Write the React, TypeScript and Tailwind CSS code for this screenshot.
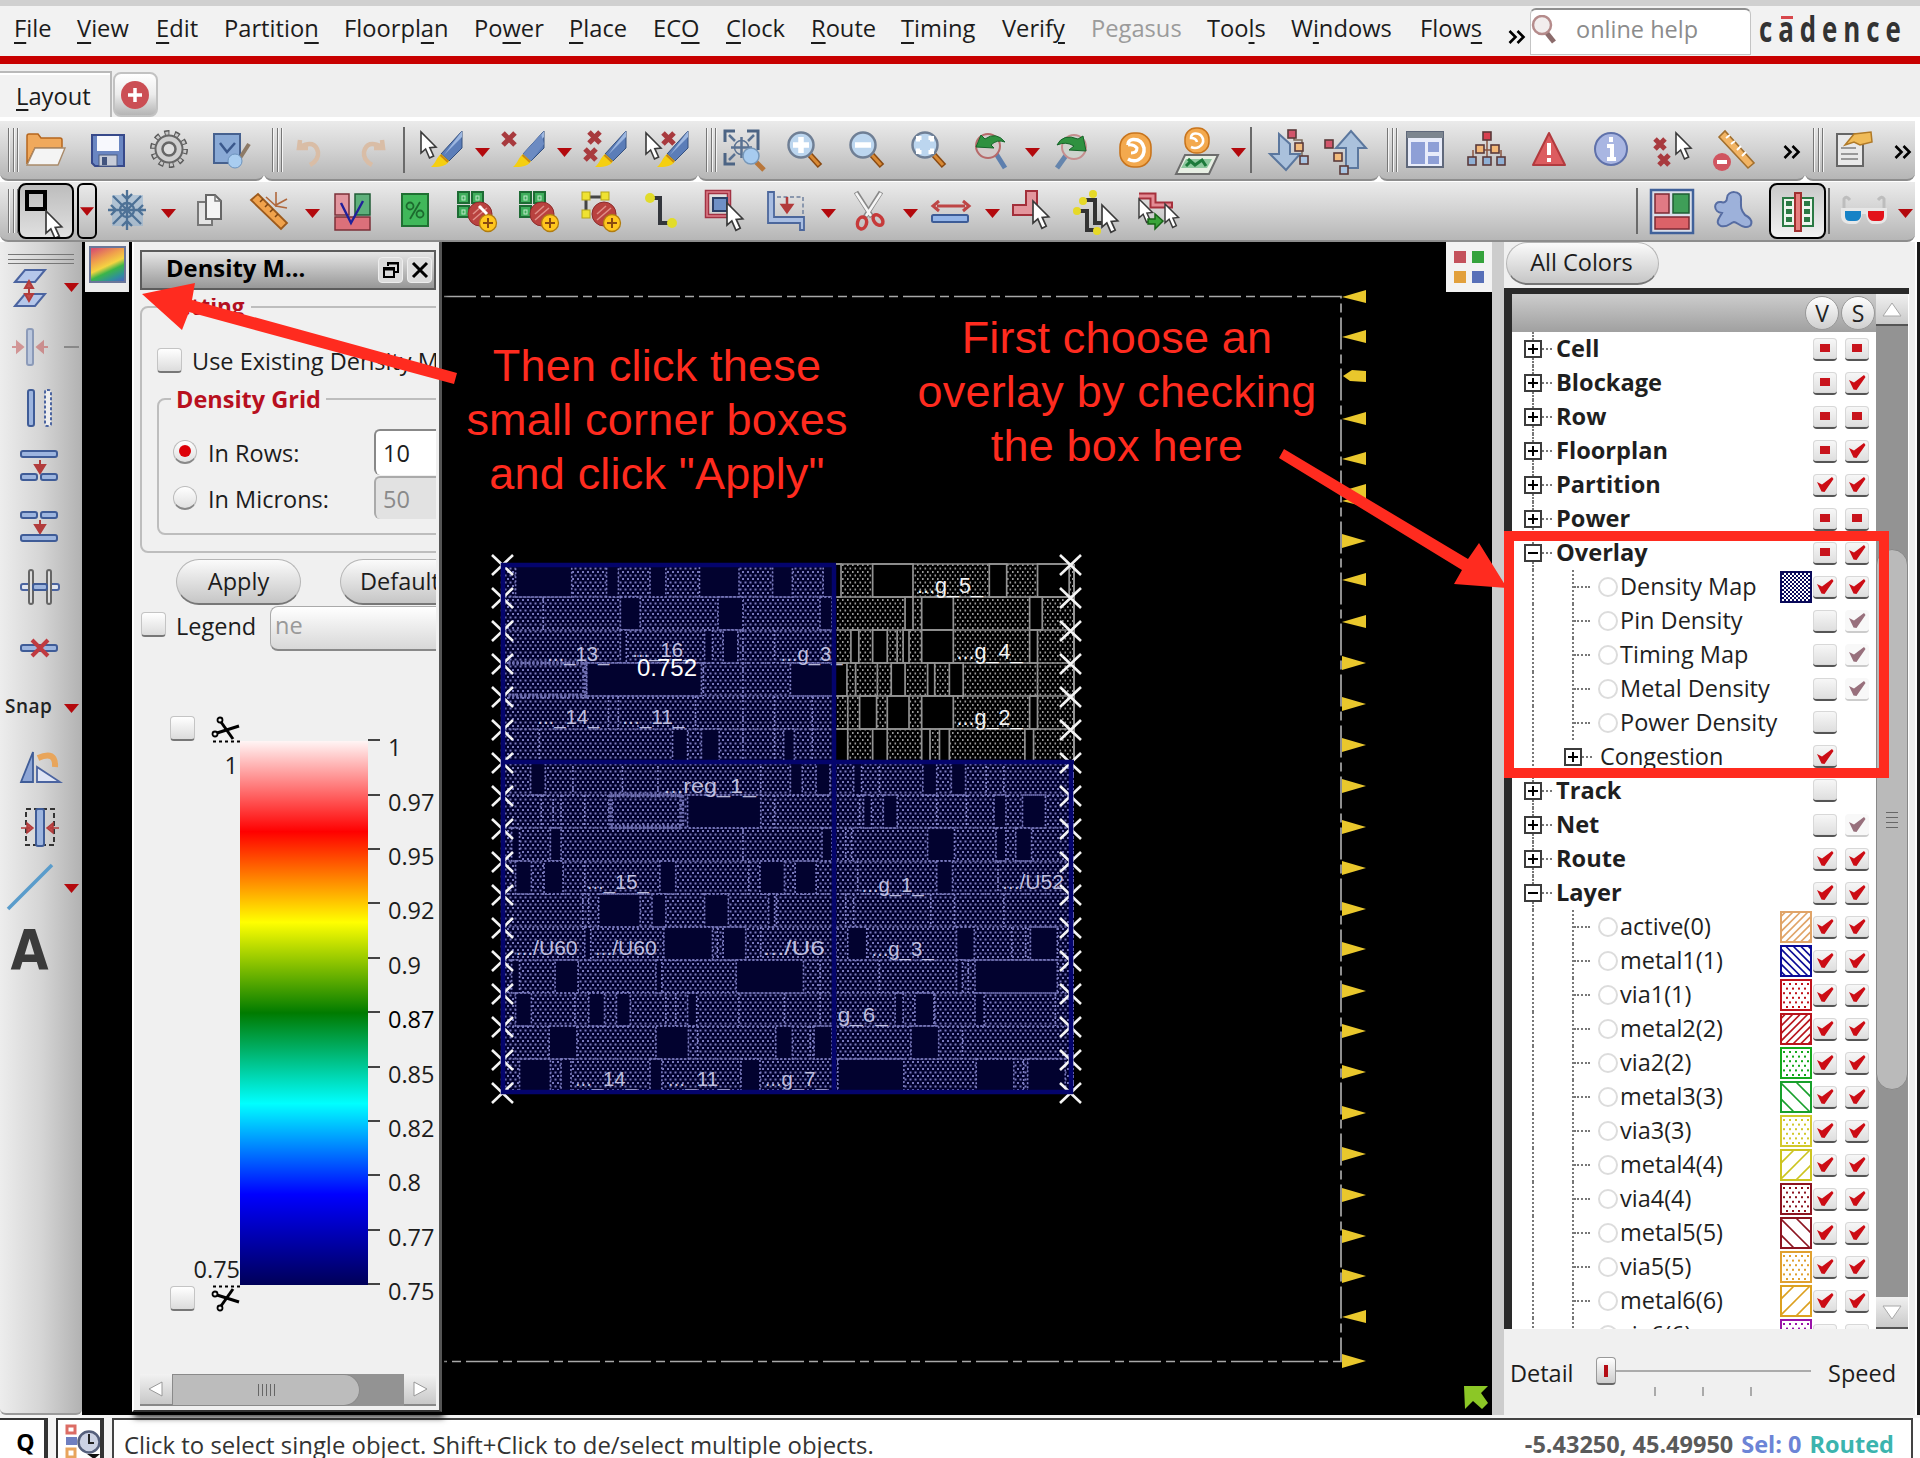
import React from "react";

type Kids = { children?: React.ReactNode };

/* ---------- shared icon parts ---------- */

function Svg({ children, s = 44 }: Kids & { s?: number }) {
  return (
    <svg width={s} height={s} viewBox="0 0 44 44" fill="none" className="shrink-0 overflow-visible">
      {children}
    </svg>
  );
}

function Cursor({ x, y, k = 1 }: { x: number; y: number; k?: number }) {
  return (
    <path
      transform={`translate(${x} ${y}) scale(${k})`}
      d="M0 0V21L4.6 17L8.5 26L12.6 24L8.8 15.6L15 15Z"
      fill="#fff"
      stroke="#3a3a3a"
      strokeWidth="1.6"
    />
  );
}

function Cross({ x, y, s = 12 }: { x: number; y: number; s?: number }) {
  return (
    <path
      d={`M${x} ${y}l${s} ${s}M${x + s} ${y}l${-s} ${s}`}
      stroke="#a83a3e"
      strokeWidth="5"
    />
  );
}

function Pen() {
  return (
    <g>
      <path d="M43 3L22 26L30 33L43 20Z" fill="#5b7db8" stroke="#34507f" strokeWidth="1" />
      <path d="M43 3L25 27L43 9Z" fill="#9db7e0" />
      <path d="M22 26L30 33C27 39 19 39 12 39C17 35 17 30 22 26Z" fill="#f5cf10" />
      <path d="M21.500 27L29 34" stroke="#c98a12" strokeWidth="2" />
    </g>
  );
}

function Mag({ children, x = 18, y = 17 }: Kids & { x?: number; y?: number }) {
  return (
    <g>
      <path d={`M${x + 9} ${y + 10}L${x + 19} ${y + 21}`} stroke="#8a4a12" strokeWidth="6" />
      <path d={`M${x + 9} ${y + 10}L${x + 18} ${y + 20}`} stroke="#d98a35" strokeWidth="3" />
      <circle cx={x} cy={y} r="12.500" fill="#bcd6ef" stroke="#6f7f95" strokeWidth="2.500" />
      {children}
    </g>
  );
}

function Plus({ x, y }: { x: number; y: number }) {
  return (
    <g>
      <circle cx={x} cy={y} r="8.500" fill="#ffc61e" stroke="#b07c10" strokeWidth="1.300" />
      <path d={`M${x - 5} ${y}h10M${x} ${y - 5}v10`} stroke="#8a4a10" strokeWidth="2" />
    </g>
  );
}

function Greens({ c }: { c: React.ReactNode }) {
  return (
    <g>
      {[
        [3, 3],
        [17, 3],
        [3, 17],
      ].map(([x, y]) => (
        <g key={`${x}-${y}`}>
          <rect x={x} y={y} width="11" height="11" fill="#3fae5c" stroke="#1d6b34" strokeWidth="2" />
          <rect x={x + 4} y={y + 4} width="3" height="4" stroke="#bfe8c8" />
        </g>
      ))}
      {c}
    </g>
  );
}

function RedDisc() {
  return (
    <g>
      <circle cx="25" cy="25" r="12" fill="#b9423f" stroke="#8c2c2c" strokeWidth="1" />
      <path d="M18 31L32 19M18 25L27 17" stroke="#e08f88" strokeWidth="1.500" />
      <Plus x={33} y={34} />
    </g>
  );
}

const sq = (x: number, y: number, c: string, s = 8) => (
  <rect key={`${x}-${y}`} x={x} y={y} width={s} height={s} fill={c} stroke="#5a3a3a" strokeWidth="1.600" />
);

/* ---------- toolbar icons ---------- */

const icons: Record<string, React.ReactNode> = {
  open: (
    <>
      <path d="M4 36V8Q4 6 6 6H15L18 10H37Q39 10 39 12V20H12Z" fill="#f0a95c" stroke="#b5651d" strokeWidth="1.500" />
      <path d="M4 37L12 20H42L35 37Z" fill="#f4f4f4" stroke="#a98a6a" strokeWidth="1.400" />
    </>
  ),
  save: (
    <>
      <path d="M7 7H39V38H10L7 35Z" fill="#6a86c2" stroke="#37498a" strokeWidth="2" />
      <rect x="12" y="8" width="22" height="15" fill="#f7f8fd" />
      <rect x="14" y="27" width="18" height="11" fill="#c7ccd8" stroke="#4d5c80" />
      <rect x="17" y="29" width="5" height="8" fill="#43557f" />
    </>
  ),
  gear: (
    <>
      <circle cx="22" cy="21" r="16" stroke="#5a5a5a" strokeWidth="6" strokeDasharray="5 5.050" />
      <circle cx="22" cy="21" r="13.500" fill="#cfcfcf" stroke="#666" strokeWidth="2" />
      <circle cx="22" cy="21" r="16" stroke="#c9c9c9" strokeWidth="3" strokeDasharray="3 7.050" strokeDashoffset="-1" />
      <circle cx="22" cy="21" r="6.500" fill="#dedede" stroke="#666" strokeWidth="2.500" />
    </>
  ),
  check: (
    <>
      <rect x="5" y="6" width="26" height="29" fill="#8aaad6" stroke="#46618f" strokeWidth="2" />
      <path d="M11 15L18 24L26 15" stroke="#3a588c" strokeWidth="2.500" />
      <path d="M31 30L40 16" stroke="#8d7a66" strokeWidth="4" />
      <circle cx="26" cy="33" r="7" fill="#a9cdf0" stroke="#6d93bd" />
    </>
  ),
  undo: <path d="M12 12L11 20L20 20M12 19Q27 11 30 24Q31 32 22 37" stroke="#d9bda6" strokeWidth="4.500" />,
  redo: <path d="M32 12L33 20L24 20M32 19Q17 11 14 24Q13 32 22 37" stroke="#d9bda6" strokeWidth="4.500" />,
  curpen: (
    <>
      <Pen />
      <Cursor x={2} y={4} />
    </>
  ),
  xpen: (
    <>
      <Pen />
      <path d="M40 6L22 26L30 33L43 16Z" fill="#6c8bc2" />
      <Cross x={2} y={5} s={12} />
    </>
  ),
  xxpen: (
    <>
      <Pen />
      <Cross x={6} y={4} s={11} />
      <Cross x={2} y={21} s={11} />
    </>
  ),
  curxpen: (
    <>
      <Pen />
      <Cross x={18} y={5} s={11} />
      <Cursor x={1} y={5} />
    </>
  ),
  fit: (
    <>
      <path d="M4 14V3H14M26 3H37V14M4 25V36H14M37 14V22" stroke="#4c6484" strokeWidth="3" />
      <path d="M8 7L14 13M33 7L27 13M8 32L14 26M20.500 9V30M10 19.500H31" stroke="#5a7292" strokeWidth="2.500" />
      <circle cx="20.500" cy="19.500" r="7" stroke="#5a7292" strokeWidth="1.500" />
      <path d="M35 34L43 42" stroke="#b8763a" strokeWidth="5" />
      <circle cx="30" cy="28" r="8" fill="#a7cbef" stroke="#7797b8" strokeWidth="1.500" />
    </>
  ),
  zin: (
    <Mag>
      <path d="M18 9V25M10 17H26" stroke="#fff" strokeWidth="5.500" />
    </Mag>
  ),
  zout: (
    <Mag>
      <path d="M10 17H26" stroke="#fff" strokeWidth="5.500" />
    </Mag>
  ),
  zfit: (
    <Mag>
      <path d="M11 10H25V24H11Z" stroke="#fff" strokeWidth="4" strokeDasharray="7 7" strokeDashoffset="3.500" />
    </Mag>
  ),
  zprev: (
    <>
      <path d="M26 24L36 40" stroke="#5d7fae" strokeWidth="5" />
      <circle cx="19" cy="18" r="12" fill="#d3cbcb" stroke="#b76a6a" strokeWidth="2" />
      <path d="M7 19L12 7L16 11Q27 3 36 14Q28 11 22 17L25 20Z" fill="#2f9140" stroke="#16652a" strokeWidth="1" />
    </>
  ),
  znext: (
    <>
      <path d="M16 26L6 40" stroke="#6585ad" strokeWidth="5" />
      <circle cx="23" cy="19" r="12" fill="#cdd3cd" stroke="#c58f8f" strokeWidth="2" />
      <path d="M35 23L18 22L23 18Q15 13 6 17Q12 5 27 11L32 8Z" fill="#2f9140" stroke="#16652a" strokeWidth="1" />
    </>
  ),
  refresh: (
    <>
      <rect x="7" y="5" width="31" height="34" rx="14" fill="#f3a94e" stroke="#c8741c" strokeWidth="1.600" />
      <path d="M15 31Q20 34 25 32Q32 28 31 20Q29 11 20 11.500Q15 12 15 17" stroke="#fff" strokeWidth="3.500" />
      <path d="M15 17Q21 16 24 20Q24 25 18 25" stroke="#fff" strokeWidth="3" />
    </>
  ),
  maprefresh: (
    <>
      <path d="M10 27H43L34 46H1Z" fill="#e8efe4" stroke="#6d6d6d" strokeWidth="2" />
      <path d="M11 31H37L32 40H6Z" fill="#8cc79d" />
      <path d="M13 31L20 37L27 32L31 38M11 38L15 34" stroke="#1c7a3a" strokeWidth="3" />
      <rect x="10" y="0" width="24" height="25" rx="11" fill="#f3a94e" stroke="#c8741c" strokeWidth="1.500" />
      <path d="M16 19Q20 21 24 19Q29 16 28 11Q26 5 20 5.500Q16 6 16 10Q21 10 22 14" stroke="#fff" strokeWidth="2.600" />
    </>
  ),
  hdown: (
    <>
      <path d="M13 6V26H4L20 42L34 26H24V16Z" fill="#aac1dc" stroke="#5b779e" strokeWidth="2" />
      <path d="M28 7V12H36V30H41" stroke="#7b6a5a" strokeWidth="1.500" />
      {sq(22, 2, "#d2556b")}
      {sq(29, 15, "#f2bb7c")}
      {sq(34, 28, "#a9c4e2")}
    </>
  ),
  hup: (
    <>
      <path d="M18 40V20H8L23 3L38 20H30V40Z" fill="#aac1dc" stroke="#5b779e" strokeWidth="2" />
      {sq(-3, 12, "#d2556b")}
      {sq(6, 25, "#f2bb7c")}
      {sq(12, 38, "#a9c4e2")}
    </>
  ),
  win: (
    <>
      <rect x="4" y="4" width="36" height="35" fill="#e8ecfa" stroke="#5f687b" strokeWidth="2" />
      <rect x="4" y="4" width="36" height="6" fill="#7d8690" />
      <path d="M8 14H22V36H8ZM25 14H36V24H25ZM25 28H36V36H25Z" fill="#8e9fd6" />
    </>
  ),
  tree: (
    <>
      <path d="M22 10V17M14 22H30M8 29V22M36 29V22M22 17V30" stroke="#8a5540" strokeWidth="1.500" />
      {sq(18, 4, "#d84050")}
      {sq(11, 17, "#f4b877")}
      {sq(26, 17, "#f4b877")}
      {[3, 18, 32].map((x) => sq(x, 29, "#8fb0d5"))}
    </>
  ),
  warn: (
    <>
      <path d="M22 5L38 37H6Z" fill="#dc5c5f" stroke="#b23a3e" strokeWidth="2" strokeLinejoin="round" />
      <path d="M22 15V27M22 30V34" stroke="#fff" strokeWidth="4" />
    </>
  ),
  info: (
    <>
      <circle cx="22" cy="21" r="16" fill="#a9b6e2" stroke="#5f71aa" strokeWidth="2" />
      <path d="M22 9V14M18 18H23V31M18 31H27" stroke="#fff" strokeWidth="4" />
    </>
  ),
  xxcur: (
    <>
      <Cross x={4} y={11} s={10} />
      <Cross x={8} y={27} s={10} />
      <Cursor x={25} y={5} />
    </>
  ),
  rulerminus: (
    <>
      <path d="M6 9L12 3L41 35L35 40Z" fill="#f2b464" stroke="#a3702e" strokeWidth="1.600" />
      <path d="M13 10L17 7M18 16L22 13M24 22L28 18M29 28L33 24" stroke="#fff" strokeWidth="2" />
      <circle cx="9" cy="34" r="9" fill="#d05560" />
      <path d="M4 34H14" stroke="#fff" strokeWidth="4" />
    </>
  ),
  note: (
    <>
      <rect x="5" y="6" width="26" height="32" fill="#e9e9e9" stroke="#666" strokeWidth="2" />
      <path d="M9 20H24M9 26H26M9 31H26" stroke="#999" strokeWidth="2" />
      <path d="M13 17L22 6L39 4L40 14L28 17L22 14Z" fill="#f0bb58" stroke="#b07a28" strokeWidth="1.500" />
    </>
  ),
  snow: (
    <>
      <rect x="7" y="6" width="31" height="31" fill="#8fb0d0" opacity=".55" />
      <g stroke="#4d7196" strokeWidth="2.300">
        <path d="M22 1V41M3 21H41M8 7L36 35M36 7L8 35M17 5L22 10L27 5M17 37L22 32L27 37M6 16L11 21L6 26M38 16L33 21L38 26" />
        <circle cx="22" cy="21" r="7" />
      </g>
    </>
  ),
  copy: (
    <>
      <path d="M11 13H25V36H11Z" fill="#e4e4e4" stroke="#777" strokeWidth="2" />
      <path d="M19 6H28L34 12V30H19Z" fill="#f4f4f4" stroke="#666" strokeWidth="2" />
      <path d="M28 6V12H34" stroke="#777" strokeWidth="1.500" />
    </>
  ),
  ruler: (
    <>
      <path d="M2 11L9 5L38 34L32 40Z" fill="#f0a24c" stroke="#9c5a1c" strokeWidth="1.800" />
      <path d="M11 13L14 10M16 18L19 15M21 23L24 20M26 28L29 25" stroke="#7d4513" strokeWidth="1.500" />
      <path d="M27 3V18M38 10L27 16M17 8L27 17L38 19" stroke="#b0683c" strokeWidth="1.600" />
    </>
  ),
  vee: (
    <>
      <rect x="4" y="5" width="14" height="21" fill="#e2969f" stroke="#7c3038" strokeWidth="1.500" />
      <rect x="24" y="5" width="15" height="21" fill="#5eb07b" stroke="#215c36" strokeWidth="1.500" />
      <rect x="4" y="28" width="35" height="13" fill="#dc707a" stroke="#7c3038" strokeWidth="1.500" />
      <path d="M10 14L20 34L32 12" stroke="#20209a" strokeWidth="2.400" />
    </>
  ),
  pct: (
    <>
      <rect x="9" y="5" width="26" height="32" fill="#40b85a" stroke="#1f7032" strokeWidth="2" />
      <circle cx="17" cy="17" r="3.500" stroke="#1c6a2e" strokeWidth="1.800" />
      <circle cx="27" cy="25" r="3.500" stroke="#1c6a2e" strokeWidth="1.800" />
      <path d="M27 13L17 30" stroke="#1c6a2e" strokeWidth="1.800" />
    </>
  ),
  add1: (
    <Greens
      c={
        <>
          <RedDisc />
          <path d="M24 17L32 25" stroke="#fff" strokeWidth="3" />
        </>
      }
    />
  ),
  add2: <Greens c={<RedDisc />} />,
  add3: (
    <>
      <path d="M7 8H24M7 8V25" stroke="#444" strokeWidth="3" />
      {[
        [3, 3],
        [22, 3],
        [3, 21],
      ].map(([x, y]) => (
        <rect key={x + y} x={x} y={y} width="8" height="8" fill="#efe232" stroke="#b5a51a" />
      ))}
      <RedDisc />
    </>
  ),
  route: (
    <>
      <path d="M10 9H19V34H29" stroke="#33363c" strokeWidth="4" />
      <circle cx="9" cy="9" r="5" fill="#e2dc2a" />
      <circle cx="31" cy="34" r="5" fill="#e2dc2a" />
    </>
  ),
  sel: (
    <>
      <rect x="4" y="3" width="22" height="24" stroke="#a23243" strokeWidth="4.500" />
      <rect x="4" y="3" width="22" height="24" stroke="#dc7c88" strokeWidth="1.500" />
      <rect x="10" y="9" width="14" height="13" fill="#6f90c5" stroke="#2b3f66" strokeWidth="2" />
      <Cursor x={24} y={14} k={1.05} />
    </>
  ),
  stretch: (
    <>
      <path d="M12 8H38V28" stroke="#8a97ad" strokeWidth="2" strokeDasharray="4 2.500" />
      <path d="M3 3V34H35V41H39V28H9V3Z" fill="#a9bee2" stroke="#4c679c" strokeWidth="1.800" />
      <path d="M22 8V18M17 16L22 23L27 16Z" stroke="#b23a3a" strokeWidth="2.500" fill="#b23a3a" />
    </>
  ),
  cut: (
    <>
      <path d="M9 3L25 28M34 3L18 28" stroke="#888" strokeWidth="5" />
      <path d="M9 4L24 27M34 4L19 27" stroke="#f6f6f6" strokeWidth="2.500" />
      <ellipse cx="15" cy="34" rx="4.500" ry="6" stroke="#c63a3a" strokeWidth="3.500" transform="rotate(15 15 34)" />
      <ellipse cx="31" cy="31" rx="4" ry="6" stroke="#c63a3a" strokeWidth="3.500" transform="rotate(-40 31 31)" />
    </>
  ),
  space: (
    <>
      <path d="M8 17H36M10 12L4 17L10 22M34 12L40 17L34 22" stroke="#be4545" strokeWidth="3" />
      <rect x="3" y="26" width="36" height="7" rx="1.500" fill="#94b5e8" stroke="#3d5c97" strokeWidth="2" />
    </>
  ),
  polycur: (
    <>
      <path d="M2 16H15V2H26V26H2Z" fill="#e3969d" stroke="#a32f3a" strokeWidth="2" />
      <Cursor x={22} y={12} k={1.050} />
    </>
  ),
  wirecur: (
    <>
      <path d="M12 11H22V34H30M3 22H14V41H22" stroke="#333" strokeWidth="4" />
      {[
        [10, 12],
        [20, 5],
        [4, 22],
        [24, 42],
      ].map(([x, y]) => (
        <circle key={x} cx={x} cy={y} r="4" fill="#e6d928" />
      ))}
      <Cursor x={29} y={16} k={1.050} />
    </>
  ),
  swapcur: (
    <>
      <path d="M4 7H18V16H38" stroke="#a6303c" strokeWidth="7" />
      <path d="M4 7H18V16H36" stroke="#e48b94" strokeWidth="3" />
      <Cursor x={4} y={10} k={0.9} />
      <Cursor x={30} y={15} k={0.9} />
      <path d="M13 30H20V25L28 32L20 40V35H13Z" fill="#3aa53a" stroke="#176417" strokeWidth="1.500" />
    </>
  ),
  plan: (
    <>
      <rect x="1" y="1" width="42" height="43" fill="#dadfea" stroke="#40619a" strokeWidth="2.500" />
      <rect x="5" y="5" width="14" height="19" fill="#e07a84" stroke="#7c2a33" strokeWidth="1.500" />
      <rect x="23" y="5" width="16" height="19" fill="#3f9e58" stroke="#1f5c33" strokeWidth="1.500" />
      <rect x="5" y="28" width="34" height="12" fill="#dc6268" stroke="#7c2a33" strokeWidth="1.500" />
    </>
  ),
  amoeba: (
    <path
      d="M15 9C15 1 30 1 29 10C29 17 28 20 33 26C43 31 40 39 33 38C27 37 25 33 22 33C18 34 15 39 9 37C2 34 8 28 10 24C1 23 1 12 9 13C12 14 15 13 15 9Z"
      fill="#9db1da"
      stroke="#566ca2"
      strokeWidth="2"
    />
  ),
  phys: (
    <>
      <rect x="7" y="9" width="30" height="28" fill="#eef5ee" stroke="#2b7a44" strokeWidth="2" />
      {[12, 20, 28].map((y) => (
        <g key={y}>
          <rect x="10" y={y} width="6" height="5" fill="#2b7a44" />
          <rect x="28" y={y} width="6" height="5" fill="#2b7a44" />
        </g>
      ))}
      <rect x="19" y="4" width="6" height="38" fill="#e57f7f" stroke="#a02f2f" strokeWidth="2" />
    </>
  ),
  glasses: (
    <>
      <path d="M2 22V10Q4 6 8 11M42 22V10Q40 6 36 11" stroke="#bdbdbd" strokeWidth="3" />
      <path d="M-1 19H45V28Q44 35 36 35H30Q25 33 24 25H20Q19 33 14 35H7Q0 34 -1 28Z" fill="#e7e7e7" />
      <path d="M3 22H19V27Q18 32 13 32H8Q3 32 3 27Z" fill="#1682c6" />
      <path d="M26 22H42V27Q42 32 37 32H32Q27 32 26 27Z" fill="#e3131b" />
    </>
  ),
};

/* ---------- left tool column icons ---------- */

const bar = (x: number, y: number, w: number, h: number) => (
  <rect x={x} y={y} width={w} height={h} rx="2" fill="#9db5df" stroke="#3f5c97" strokeWidth="2" />
);
const downArrow = <path d="M22 14V20M17 19H27L22 27Z" stroke="#b23c3c" strokeWidth="2" fill="#b23c3c" />;

const sideIcons: Record<string, React.ReactNode> = {
  layers: (
    <>
      <path d="M7 17L17 5H37L27 17Z" fill="#b5c7ea" stroke="#4b64a0" strokeWidth="2" />
      <path d="M7 41L17 29H37L27 41Z" fill="#b5c7ea" stroke="#4b64a0" strokeWidth="2" />
      <path d="M21 22V30M17 23L21 16L25 23ZM17 29L21 36L25 29Z" stroke="#b23c3c" strokeWidth="2" fill="#c24a4a" />
    </>
  ),
  squeeze: (
    <g opacity=".5">
      {bar(19, 4, 6, 36)}
      <path d="M4 22H14M9 17L15 22L9 27ZM40 22H30M35 17L29 22L35 27Z" stroke="#c24a4a" strokeWidth="2" fill="#c24a4a" />
    </g>
  ),
  ghost: (
    <>
      {bar(10, 4, 6, 36)}
      <rect x="27" y="4" width="6" height="36" rx="2" fill="#eee" stroke="#4b64a0" strokeWidth="2" strokeDasharray="3 2" />
    </>
  ),
  split: (
    <>
      {bar(3, 5, 36, 6)}
      {downArrow}
      {bar(3, 28, 16, 6)}
      {bar(23, 28, 16, 6)}
    </>
  ),
  merge: (
    <>
      {bar(3, 6, 16, 6)}
      {bar(23, 6, 16, 6)}
      {downArrow}
      {bar(3, 29, 36, 6)}
    </>
  ),
  hash: (
    <>
      <rect x="3" y="18" width="38" height="6" rx="2" fill="#e2e6f0" stroke="#4b64a0" strokeWidth="2" />
      <rect x="11" y="4" width="4" height="34" rx="2" stroke="#666" strokeWidth="2" fill="#ddd" />
      <rect x="29" y="4" width="4" height="34" rx="2" stroke="#666" strokeWidth="2" fill="#ddd" />
      {bar(15, 18, 14, 6)}
    </>
  ),
  del: (
    <>
      {bar(3, 19, 36, 6)}
      <path d="M14 14L30 30M30 14L14 30" stroke="#c03a40" strokeWidth="4" />
    </>
  ),
  mirror: (
    <>
      <path d="M3 36L15 6V36Z" fill="#8ea6d6" stroke="#3f5c97" strokeWidth="1.800" />
      <path d="M19 36V21L42 36Z" fill="#dfe5f5" stroke="#4b64a0" strokeWidth="1.800" />
      <path d="M20 12Q38 4 37 21" stroke="#e8a55b" strokeWidth="6" />
    </>
  ),
  center: (
    <>
      <path d="M8 3H36V39H8Z" stroke="#333" strokeWidth="2" strokeDasharray="5 3" />
      {bar(18, 3, 8, 37)}
      <path d="M3 22H12M9 17L15 22L9 27ZM41 22H32M35 17L29 22L35 27Z" stroke="#b23c3c" strokeWidth="1.500" fill="#c24a4a" />
    </>
  ),
  line: <path d="M0 43L44 -1" stroke="#5a9ccb" strokeWidth="3.500" />,
};

/* ---------- toolbar pieces ---------- */

function Slot({ n }: { n: string }) {
  return (
    <div className="flex h-full w-[62px] shrink-0 items-center justify-center">
      <Svg>{icons[n]}</Svg>
    </div>
  );
}

function Drop() {
  return (
    <div className="flex h-full w-5 shrink-0 items-center justify-center">
      <svg width="15" height="9" viewBox="0 0 15 9" className="mt-1">
        <path d="M0 0H15L7.500 9Z" fill="#b3090d" />
      </svg>
    </div>
  );
}

function Handle() {
  return (
    <div className="ml-2 flex h-[44px] w-[10px] shrink-0 justify-between self-center">
      <i className="w-px bg-[#777] shadow-[1px_0_#f5f5f5]" />
      <i className="w-px bg-[#777] shadow-[1px_0_#f5f5f5]" />
      <i className="w-px bg-[#777] shadow-[1px_0_#f5f5f5]" />
    </div>
  );
}

function Bar({ children, className }: Kids & { className: string }) {
  return (
    <div
      className={`flex h-[60px] shrink-0 items-center rounded-b-lg border-b-2 border-[#8d8d8d] bg-gradient-to-b from-[#ebebeb] via-[#d2d2d2] to-[#b6b6b6] ${className}`}
    >
      {children}
    </div>
  );
}

const Sep = ({ className = "" }: { className?: string }) => (
  <div className={`h-[46px] w-[2px] shrink-0 self-center bg-[#6a6a6a] ${className}`} />
);

const More = ({ className = "" }: { className?: string }) => (
  <svg width="18" height="14" viewBox="0 0 18 14" fill="none" className={`shrink-0 ${className}`}>
    <path d="M1.500 1L7.500 7L1.500 13M9.500 1L15.500 7L9.500 13" stroke="#000" strokeWidth="2.600" />
  </svg>
);

/* ---------- menu ---------- */

const menus: [string, string, string, string][] = [
  ["", "F", "ile", "w-[63px]"],
  ["", "V", "iew", "w-[79px]"],
  ["", "E", "dit", "w-[68px]"],
  ["Partitio", "n", "", "w-[120px]"],
  ["Floorpl", "a", "n", "w-[130px]"],
  ["Po", "w", "er", "w-[95px]"],
  ["", "P", "lace", "w-[84px]"],
  ["EC", "O", "", "w-[73px]"],
  ["", "C", "lock", "w-[85px]"],
  ["", "R", "oute", "w-[90px]"],
  ["", "T", "iming", "w-[101px]"],
  ["Verif", "y", "", "w-[89px]"],
  ["Pegasus", "", "", "w-[116px]"],
  ["Too", "l", "s", "w-[84px]"],
  ["W", "i", "ndows", "w-[129px]"],
  ["Flow", "s", "", "w-[87px]"],
];

function MenuBar() {
  return (
    <div className="flex h-[56px] shrink-0 items-start border-t-[6px] border-[#d0d0d0] bg-[#f2f2f2] pl-[14px]">
      {menus.map(([a, u, b, w]) => (
        <div
          key={a + u + b}
          className={`${w} shrink-0 whitespace-pre pt-[6px] text-[23.700px] leading-8 ${a === "Pegasus" ? "text-[#9b9b9b]" : "text-[#1c1c1c]"}`}
        >
          {a}
          <span className="underline decoration-2 underline-offset-[5px]">{u}</span>
          {b}
        </div>
      ))}
      <More className="ml-[1px] mt-[24px]" />
      <div className="ml-[4px] mt-[2px] flex h-[47px] w-[221px] shrink-0 items-center rounded-t-md border border-t-2 border-[#c4c4c4] border-t-[#8f8f8f] bg-white">
        <svg width="28" height="34" viewBox="0 0 28 34" fill="none">
          <path d="M15 17L23 27" stroke="#8b6b6b" strokeWidth="5" />
          <circle cx="11" cy="10" r="9" fill="#f2eded" stroke="#b58b8b" strokeWidth="2.500" />
        </svg>
        <span className="ml-[17px] mt-[-4px] text-[23.500px] text-[#8c8c8c]">online help</span>
      </div>
      <div className="relative ml-[8px] mt-[-1px] h-[50px] w-[150px] font-['Open_Sans'] text-[36px] font-bold leading-[48px] tracking-[8.200px] text-[#333]">
        <span className="inline-block origin-left scale-x-[0.72]">cadence</span>
        <i className="absolute left-[22px] top-[11px] h-[3px] w-[12px] bg-[#d8474c]" />
      </div>
    </div>
  );
}

function Tabs() {
  return (
    <div className="flex h-[57px] shrink-0 items-end border-b-4 border-white bg-[#efefef]">
      <div className="flex h-[46px] w-[112px] items-center border-r-2 border-t-2 border-[#b9b9b9] bg-[#f2f2f2] pl-4 pt-[3px] text-[23.700px] text-[#1c1c1c] shadow-[inset_0_2px_#fff]">
        <span>
          <span className="underline decoration-2 underline-offset-[4px]">L</span>ayout
        </span>
      </div>
      <div className="ml-[1px] flex h-[45px] w-[45px] items-center justify-center rounded-lg border-2 border-[#c2c2c2] bg-gradient-to-b from-white via-[#ececec] to-[#b5b5b5]">
        <svg width="30" height="30" viewBox="0 0 30 30">
          <circle cx="14" cy="15" r="14" fill="#cb4e54" />
          <path d="M14 8V22M7 15H21" stroke="#fff" strokeWidth="3.500" />
        </svg>
      </div>
    </div>
  );
}

const list = (names: string) => names.split(" ").map((n, i) => (n === "v" ? <Drop key={i} /> : <Slot key={i} n={n} />));

function Toolbars() {
  return (
    <div className="flex shrink-0 flex-col bg-white pr-[5px]">
      <div className="flex h-[60px]">
        <Bar className="w-[264px]">
          <Handle />
          <div className="-ml-1 flex h-full">{list("open save gear check")}</div>
        </Bar>
        <Bar className="w-[434px]">
          <Handle />
          <div className="-ml-[3px] flex h-full">{list("undo redo")}</div>
          <Sep />
          <div className="ml-[5px] flex h-full">{list("curpen v xpen v xxpen curxpen")}</div>
        </Bar>
        <Bar className="w-[681px]">
          <Handle />
          <div className="-ml-1 flex h-full">{list("fit zin zout zfit zprev v znext refresh maprefresh v")}</div>
          <Sep className="ml-[2px]" />
          <div className="ml-[5px] flex h-full">{list("hdown hup")}</div>
        </Bar>
        <Bar className="w-[426px]">
          <Handle />
          <div className="-ml-[3px] flex h-full">{list("win tree warn info xxcur rulerminus")}</div>
          <More className="ml-[17px] mt-1" />
        </Bar>
        <Bar className="w-[110px]">
          <Handle />
          <div className="flex h-full">{list("note")}</div>
          <More className="ml-[9px] mt-1" />
        </Bar>
      </div>
      <Bar className="mt-[1px] w-full">
        <Handle />
        <div className="ml-0 h-[56px] w-[56px] shrink-0 rounded-lg border-2 border-black bg-gradient-to-b from-[#bdbdbd] to-[#e0e0e0]">
          <svg width="52" height="52" viewBox="0 0 52 52" fill="none">
            <rect x="7" y="7" width="18" height="17" stroke="#000" strokeWidth="4" />
            <Cursor x={26} y={26} k={1.050} />
          </svg>
        </div>
        <div className="ml-[3px] flex h-[56px] w-[20px] shrink-0 items-center rounded-md border-2 border-black pl-[1px]">
          <svg width="14" height="9" viewBox="0 0 15 9">
            <path d="M0 0H15L7.500 9Z" fill="#b3090d" />
          </svg>
        </div>
        <div className="-ml-[1px] flex h-full">
          {list("snow v copy ruler v vee pct add1 add2 add3 route sel stretch v cut v space v polycur wirecur swapcur")}
        </div>
        <div className="flex-1" />
        <Sep />
        <div className="ml-[3px] flex h-full">{list("plan amoeba")}</div>
        <div className="ml-[4px] flex h-[56px] w-[57px] shrink-0 items-center justify-center rounded-lg border-2 border-black bg-gradient-to-b from-[#c9c9c9] to-[#f2f2f2]">
          <Svg>{icons.phys}</Svg>
        </div>
        <Sep className="ml-[2px]" />
        <div className="ml-[3px] flex h-full">{list("glasses v")}</div>
      </Bar>
    </div>
  );
}

/* ---------- left column ---------- */

const Tri = () => (
  <svg width="15" height="9" viewBox="0 0 15 9" className="shrink-0">
    <path d="M0 0H15L7.500 9Z" fill="#b3090d" />
  </svg>
);

function SideItem({ n, left, tail }: { n: string; left?: boolean; tail?: React.ReactNode }) {
  return (
    <div className={`flex h-[60px] shrink-0 items-center ${left ? "pl-2" : "pl-[18px]"}`}>
      <Svg>{sideIcons[n]}</Svg>
      {tail && <div className="ml-3">{tail}</div>}
    </div>
  );
}

function SideBar() {
  return (
    <div className="flex w-[82px] shrink-0 flex-col overflow-hidden rounded-b-md border-b-2 border-[#9a9a9a] bg-gradient-to-r from-[#ededed] via-[#d5d5d5] to-[#b2b2b2] pt-3">
      <div className="ml-2 flex h-[10px] w-[66px] shrink-0 flex-col justify-between">
        <i className="h-px bg-[#777]" />
        <i className="h-px bg-[#777]" />
        <i className="h-px bg-[#777]" />
      </div>
      <div className="-mt-[7px]" />
      <SideItem n="layers" left tail={<Tri />} />
      <SideItem n="squeeze" left tail={<div className="h-[2px] w-[15px] bg-[#888]" />} />
      <div className="pt-[1px]" />
      <SideItem n="ghost" />
      <SideItem n="split" />
      <SideItem n="merge" />
      <SideItem n="hash" />
      <SideItem n="del" />
      <div className="flex h-[60px] shrink-0 items-center pl-[5px] text-[19px] font-semibold tracking-[0.5px] text-[#222]">
        <span className="-mt-1 w-[59px]">Snap</span>
        <Tri />
      </div>
      <SideItem n="mirror" />
      <SideItem n="center" />
      <SideItem n="line" left tail={<Tri />} />
      <div className="mt-[2px] flex h-[60px] w-[60px] items-center justify-center font-['DejaVu_Sans'] text-[56px] font-bold leading-none text-[#3b3b3b]">
        <span className="scale-x-[0.88]">A</span>
      </div>
    </div>
  );
}

/* ---------- density panel ---------- */

const Box = ({ className = "" }: { className?: string }) => (
  <i
    className={`block h-[25px] w-[25px] shrink-0 rounded-[4px] border border-b-2 border-[#c4c4c4] border-b-[#777] bg-gradient-to-b from-white to-[#dcdcdc] ${className}`}
  />
);

const Radio = ({ on }: { on?: boolean }) => (
  <div className="flex h-6 w-6 items-center justify-center rounded-full border border-b-2 border-[#bbb] border-b-[#888] bg-gradient-to-b from-white to-[#e0e0e0]">
    {on && <i className="h-3 w-3 rounded-full bg-[#dd0008]" />}
  </div>
);

function Scissors({ flip }: { flip?: boolean }) {
  return (
    <svg width="29" height="27" viewBox="0 0 29 27" fill="none" className={flip ? "-scale-y-100" : ""}>
      <circle cx="9" cy="4" r="2.500" stroke="#000" strokeWidth="1.800" />
      <circle cx="4" cy="18" r="2.500" stroke="#000" strokeWidth="1.800" />
      <path d="M10 6L22 23" stroke="#000" strokeWidth="3" />
      <path d="M6 17L28 10" stroke="#000" strokeWidth="3" />
      <path d="M2 25.500H29" stroke="#000" strokeWidth="2" strokeDasharray="3 3" />
    </svg>
  );
}

const ticks = ["1", "0.97", "0.95", "0.92", "0.9", "0.87", "0.85", "0.82", "0.8", "0.77", "0.75"];

function DensityPanel() {
  return (
    <div className="relative z-10 flex h-[1170px] w-[310px] shrink-0 flex-col overflow-visible border-b-2 border-l-2 border-r-[3px] border-b-[#333] border-l-white border-r-[#555] bg-[#f0f0f0] text-[23.500px] text-[#1c1c1c] shadow-[2px_6px_6px_rgba(0,0,0,0.7)]">
      <div className="ml-[6px] mt-[8px] flex h-[40px] w-[296px] shrink-0 items-center border-2 border-[#5c5c5c] bg-gradient-to-b from-[#e6e6e6] to-[#989898]">
        <span className="ml-[24px] flex-1 pb-[3px] text-[23.800px] font-bold text-black">Density M...</span>
        <div className="mr-[4px] flex h-[26px] w-[25px] items-center justify-center rounded border border-[#eee] bg-[#dcdcdc]">
          <svg width="18" height="18" viewBox="0 0 18 18" fill="none" stroke="#000" strokeWidth="2">
            <path d="M6 5V2H16V11H12M6 2.500H16" />
            <path d="M2 7H12V16H2ZM2 8.500H12" />
          </svg>
        </div>
        <div className="mr-[2px] flex h-[26px] w-[25px] items-center justify-center rounded border border-[#eee] bg-[#dcdcdc]">
          <svg width="18" height="18" viewBox="0 0 18 18" fill="none" stroke="#000" strokeWidth="3">
            <path d="M2 2L16 16M16 2L2 16" />
          </svg>
        </div>
      </div>

      <div className="ml-[6px] flex h-[263px] w-[296px] shrink-0 flex-col overflow-hidden">
        <fieldset className="flex h-[263px] w-[330px] flex-col rounded-lg border-2 border-[#bdbdbd] pl-[15px]">
          <legend className="ml-[2px] px-[6px] text-[22.500px] font-bold leading-[33px] text-[#b3101f] [clip-path:inset(8px_0_0_0)]">
            Setting
          </legend>
          <div className="mt-[24px] flex h-[27px] items-center whitespace-nowrap">
            <Box />
            <span className="ml-[10px] mt-[3px]">Use Existing Density Map</span>
          </div>
          <fieldset className="mt-[8px] h-[153px] w-[320px] rounded-lg border-2 border-[#bdbdbd] pl-[14px]">
            <legend className="-ml-[2px] px-[5px] text-[23.500px] font-bold leading-[34px] text-[#b8101f]">Density Grid</legend>
            <div className="mt-[12px] flex h-[47px] items-center">
              <Radio on />
              <span className="ml-[11px] w-[166px] pt-[5px]">In Rows:</span>
              <div className="flex h-[46px] flex-1 items-center rounded-l-md border-l-2 border-t-2 border-[#888] bg-white pl-[7px] pt-[2px]">10</div>
            </div>
            <div className="flex h-[45px] items-center">
              <Radio />
              <span className="ml-[11px] w-[166px] pt-[5px]">In Microns:</span>
              <div className="flex h-[43px] flex-1 items-center rounded-l-md border-l-2 border-t-2 border-[#aaa] bg-[#e2e2e2] pl-[7px] pt-[2px] text-[#8a8a8a]">
                50
              </div>
            </div>
          </fieldset>
        </fieldset>
      </div>

      <div className="mt-[6px] flex w-[302px] shrink-0 gap-[39px] overflow-hidden pl-[42px]">
        <div className="flex h-[46px] w-[125px] shrink-0 items-center justify-center rounded-full border border-b-2 border-[#b5b5b5] border-b-[#777] bg-gradient-to-b from-[#fbfbfb] to-[#c6c6c6]">
          Apply
        </div>
        <div className="flex h-[46px] w-[125px] shrink-0 items-center rounded-full border border-b-2 border-[#b5b5b5] border-b-[#777] bg-gradient-to-b from-[#fbfbfb] to-[#c6c6c6] pl-[19px]">
          Default
        </div>
      </div>
      <div className="flex h-[46px] w-[302px] shrink-0 items-center overflow-hidden pl-[7px]">
        <Box className="-mt-2" />
        <span className="-mt-[2px] ml-[10px] w-[94px]">Legend</span>
        <div className="flex h-[45px] flex-1 items-center rounded-l-lg border border-b-2 border-r-0 border-[#aaa] border-b-[#888] bg-gradient-to-b from-white to-[#d8d8d8] pl-[4px] pb-1 text-[#999]">
          ne
        </div>
      </div>

      <div className="mt-[65px] flex w-[302px] shrink-0">
        <div className="flex h-[596px] w-[106px] shrink-0 flex-col items-end">
          <div className="flex h-[27px] w-[70px] justify-between">
            <Box />
            <Scissors />
          </div>
          <span className="mt-[6px] pr-[2px] leading-8">1</span>
          <div className="flex-1" />
          <span className="leading-8">0.75</span>
          <div className="flex h-[27px] w-[70px] justify-between">
            <Box className="mt-[1px]" />
            <Scissors flip />
          </div>
        </div>
        <div className="mt-[25px] h-[544px] w-[128px] shrink-0 bg-[linear-gradient(to_bottom,#fff5f5,#ff0000_16.66%,#ffff00_33.33%,#007b00_50%,#00ffff_66.66%,#0000ff_83.33%,#000058)]" />
        <div className="mt-[-3px] flex flex-col">
          {ticks.map((t) => (
            <div key={t} className="flex h-[54.400px] items-center">
              <i className="h-[2px] w-[12px] bg-[#444]" />
              <span className={`ml-[8px] mt-[14px] leading-8 ${t === "0.87" ? "text-black" : ""}`}>{t}</span>
            </div>
          ))}
        </div>
      </div>

      <div className="mb-[4px] ml-[6px] mt-auto flex h-[32px] w-[296px] shrink-0">
        <div className="flex w-[32px] items-center justify-center border-b-2 border-[#888] bg-gradient-to-b from-[#f2f2f2] to-[#c8c8c8]">
          <svg width="16" height="16" viewBox="0 0 16 16">
            <path d="M14 1L1 8L14 15Z" fill="#fff" stroke="#999" strokeWidth="1" />
          </svg>
        </div>
        <div className="flex-1 bg-[#939393]">
          <div className="flex h-[32px] w-[188px] items-center justify-center gap-[3px] rounded-l-2xl rounded-r-full border border-[#8a8a8a] bg-[#bcbcbc]">
            {[0, 1, 2, 3, 4].map((i) => (
              <i key={i} className="h-3 w-px bg-[#666]" />
            ))}
          </div>
        </div>
        <div className="flex w-[32px] items-center justify-center border-b-2 border-[#888] bg-gradient-to-b from-[#f2f2f2] to-[#c8c8c8]">
          <svg width="16" height="16" viewBox="0 0 16 16">
            <path d="M2 1L15 8L2 15Z" fill="#fff" stroke="#999" strokeWidth="1" />
          </svg>
        </div>
      </div>
    </div>
  );
}

/* ---------- die drawing ---------- */

/* Column units of the die: one unit is 0.3954 px, origin at x = 398 of the canvas. */
const cx = (v: number) => 398 + v / 2.529;
const rowY = (i: number) => 322 + i * 33;

const gaps: number[][][] = [
  [[90, 232], [320, 350], [430, 470], [555, 655], [740, 790], [868, 913], [993, 1095], [1288, 1332], [1410, 1490]],
  [[355, 405], [602, 665], [860, 890], [1075, 1095], [1117, 1197], [1390, 1422]],
  [[355, 370], [568, 588], [615, 652], [938, 958], [993, 1030], [1070, 1085], [1117, 1197], [1390, 1410]],
  [[270, 560], [785, 928], [1040, 1075], [1132, 1150], [1187, 1222]],
  [[960, 1003], [1030, 1085], [1117, 1197], [1390, 1410]],
  [[487, 525], [560, 605], [768, 795], [895, 930], [993, 1030], [1117, 1138], [1162, 1187], [1378, 1400]],
  [[128, 165], [785, 815], [850, 885], [945, 965], [1120, 1155], [1192, 1228]],
  [[525, 710], [970, 990], [1020, 1055], [1300, 1330], [1372, 1430]],
  [[80, 100], [178, 205], [865, 890], [1132, 1200], [1305, 1330], [1355, 1395]],
  [[90, 130], [162, 210], [455, 495], [708, 770], [797, 850], [1155, 1195]],
  [[300, 405], [435, 470], [568, 628], [730, 745]],
  [[265, 280], [465, 588], [615, 672], [930, 978], [1205, 1250], [1392, 1460]],
  [[80, 100], [190, 248], [445, 460], [648, 818], [1205, 1220], [1252, 1460]],
  [[90, 130], [275, 315], [345, 380], [525, 548], [1050, 1070], [1100, 1148], [1252, 1275]],
  [[175, 245], [445, 527], [748, 790], [845, 890], [1090, 1160]],
  [[100, 178], [205, 230], [430, 460], [660, 708], [905, 1072], [1255, 1350], [1385, 1480]],
];

const walls: number[][] = [
  [],
  [160],
  [665, 745, 1055],
  [265, 565, 665, 950, 1005, 1410],
  [325, 350, 545, 665, 745, 840, 930],
  [150, 665, 745, 840],
  [235, 360, 450, 710, 1010, 1280, 1325],
  [155, 185, 205, 265, 745, 960, 1155, 1230],
  [665, 925, 940],
  [265, 680, 955, 1310],
  [260, 275, 750, 925, 945, 1140, 1200, 1325],
  [600, 710, 900, 1345, 1380],
  [860, 1010, 1235],
  [240, 470, 495, 655, 770, 860, 1150, 1455],
  [550, 835, 1220],
  [1375],
];

const labels: [string, number, number][] = [
  ["...g_5_", 1105, 165],
  ["...g_4_", 1205, 362],
  ["...g_2_", 1205, 560],
];
const dimLabels: [string, number, number][] = [
  ["..._13_", 170, 362],
  ["..._16_", 385, 352],
  ["...g_3_", 760, 362],
  ["..._14_", 145, 552],
  ["..._11_", 360, 552],
  ["...reg_1_", 465, 758],
  ["..._15_", 270, 1048],
  ["...g_1_", 965, 1056],
  [".../U52", 1320, 1048],
  [".../U60", 90, 1245],
  [".../U60", 290, 1245],
  [".../U6", 715, 1245],
  ["...g_3_", 990, 1248],
  ["g_6_", 905, 1446],
  ["..._14_", 240, 1638],
  ["..._11_", 475, 1638],
  ["...g_7_", 720, 1638],
];

const padTips: [number, boolean][] = [
  [55, true], [95, true], [177, true], [217, true], [249, true], [259, true], [299, false], [338, true],
  [380, true], [421, false], [462, false], [503, false], [544, false], [585, false], [626, false], [667, false],
  [707, false], [749, false], [789, false], [830, false], [871, false], [912, false], [953, false], [994, false],
  [1034, false], [1075, true], [1119, false],
];

function Die() {
  const L = 418.5;
  const R = 992;
  const midX = 752;
  const midY = 519;
  const bottom = rowY(16);
  return (
    <svg width="1410" height="1172" viewBox="0 0 1410 1172" className="absolute left-0 top-0" fill="none">
      <defs>
        <pattern id="dim" width="5" height="7" patternUnits="userSpaceOnUse">
          <rect width="5" height="7" fill="#02022f" />
          <rect width="2" height="2" fill="#7878bc" />
          <rect x="2.500" y="3.500" width="2" height="2" fill="#7878bc" />
        </pattern>
        <pattern id="lit" width="5" height="7" patternUnits="userSpaceOnUse">
          <rect width="5" height="7" fill="#000" />
          <rect width="1.600" height="2" fill="#9a9a9a" />
          <rect x="2.500" y="3.500" width="1.600" height="2" fill="#9a9a9a" />
        </pattern>
        <clipPath id="litArea">
          <rect x={midX} y="320" width={R - midX + 2} height={midY - 320} />
        </clipPath>
        <clipPath id="dimArea">
          <path d={`M${L} 320H${midX}V${midY}H${R}V${bottom}H${L}Z`} />
        </clipPath>
      </defs>

      {/* core boundary */}
      <path d="M362 54.500H1259V1119.500H362" stroke="#a8a8a8" strokeWidth="1.700" strokeDasharray="32 5 9 5" />

      {[
        { id: "dimArea", fill: "url(#dim)", hole: "#02022f", line: "#7c7cc0", dash: "2 2", w: 1.6 },
        { id: "litArea", fill: "url(#lit)", hole: "#000", line: "#929292", dash: undefined, w: 1.7 },
      ].map((z) => (
        <g key={z.id} clipPath={`url(#${z.id})`}>
          <rect x={L} y="322" width={R - L} height={bottom - 322} fill={z.fill} />
          {gaps.map((row, i) =>
            row.map(([a, b]) => (
              <rect
                key={`${i}-${a}`}
                x={cx(a)}
                y={rowY(i)}
                width={cx(b) - cx(a)}
                height="33"
                fill={z.hole}
                stroke={z.line}
                strokeWidth={z.w}
                strokeDasharray={z.dash}
              />
            )),
          )}
          {walls.map((row, i) =>
            row.map((a) => (
              <path key={`${i}-${a}`} d={`M${cx(a)} ${rowY(i)}v33`} stroke={z.line} strokeWidth={z.w} strokeDasharray={z.dash} />
            )),
          )}
          {Array.from({ length: 17 }, (_, i) => (
            <path key={i} d={`M${L} ${rowY(i)}H${R}`} stroke={z.line} strokeWidth={z.w} strokeDasharray={z.dash} />
          ))}
          <path d={`M${R} 322V${bottom}`} stroke={z.line} strokeWidth="2" strokeDasharray={z.dash} />
        </g>
      ))}

      {/* selected cells */}
      <g stroke="#6c6cae" strokeWidth="5" strokeDasharray="2 2">
        <path d={`M${cx(72)} ${rowY(3)}H${cx(265)}V${rowY(4)}H${cx(72)}`} />
        <rect x={cx(330)} y={rowY(7)} width={cx(510) - cx(330)} height="32" />
      </g>

      <g fontFamily="'Liberation Sans'" fontSize="22">
        {dimLabels.map(([t, x, y], i) => (
          <text
            key={i}
            x={cx(x)}
            y={298 + y / 3}
            fill="#d8d8f4"
            fontSize="20"
            opacity=".85"
            textLength={t === "g_6_" ? 50 : t.includes("reg") ? 92 : 62}
            lengthAdjust="spacingAndGlyphs"
          >
            {t}
          </text>
        ))}
        {labels.map(([t, x, y], i) => (
          <text key={i} x={cx(x)} y={296 + y / 3} fill="#f2f2f2" textLength="66" lengthAdjust="spacingAndGlyphs">
            {t}
          </text>
        ))}
        <text x="555" y="434" fill="#fff" fontSize="24" textLength="60" lengthAdjust="spacingAndGlyphs">
          0.752
        </text>
      </g>

      {/* row end markers */}
      <g stroke="#f4f4f4" strokeWidth="2.600">
        {Array.from({ length: 17 }, (_, i) => {
          const y = rowY(i) + 1;
          return <path key={i} d={`M410 ${y - 10}l21 20M431 ${y - 10}l-21 20M978 ${y - 10}l21 20M999 ${y - 10}l-21 20`} />;
        })}
      </g>

      {/* density tiles */}
      <g stroke="#04046c" strokeWidth="4.500">
        <path d={`M${midX + 2} 323H421V${bottom}H${R - 3}V${midY}M421 ${midY + 1}H${R}M${midX} 323V${bottom}`} />
      </g>

      {padTips.map(([y, tipLeft]) => (
        <path key={y} d={tipLeft ? `M1260 ${y}L1284 ${y - 7}V${y + 6}Z` : `M1260 ${y - 7}L1284 ${y}L1260 ${y + 7}Z`} fill="#e9c72c" />
      ))}
      <path d="M1261 134L1270 128L1284 129V140L1268 139Z" fill="#e9c72c" />

      {/* corner pointer */}
      <path d="M1382 1144H1406L1399 1151L1406 1161L1400 1167L1391 1159L1383 1167Z" fill="#8cc726" />
    </svg>
  );
}

/* ---------- layer tree ---------- */

type Mark = "sq" | "on" | "off" | "dim" | "";
type Row = { t: string; k: "group" | "open" | "leaf" | "sub"; v: Mark; s: Mark; c?: string; p?: string };

const rows: Row[] = [
  { t: "Cell", k: "group", v: "sq", s: "sq" },
  { t: "Blockage", k: "group", v: "sq", s: "on" },
  { t: "Row", k: "group", v: "sq", s: "sq" },
  { t: "Floorplan", k: "group", v: "sq", s: "on" },
  { t: "Partition", k: "group", v: "on", s: "on" },
  { t: "Power", k: "group", v: "sq", s: "sq" },
  { t: "Overlay", k: "open", v: "sq", s: "on" },
  { t: "Density Map", k: "leaf", v: "on", s: "on", c: "#0a0a5a", p: "mesh" },
  { t: "Pin Density", k: "leaf", v: "off", s: "dim" },
  { t: "Timing Map", k: "leaf", v: "off", s: "dim" },
  { t: "Metal Density", k: "leaf", v: "off", s: "dim" },
  { t: "Power Density", k: "leaf", v: "off", s: "" },
  { t: "Congestion", k: "sub", v: "on", s: "" },
  { t: "Track", k: "group", v: "off", s: "" },
  { t: "Net", k: "group", v: "off", s: "dim" },
  { t: "Route", k: "group", v: "on", s: "on" },
  { t: "Layer", k: "open", v: "on", s: "on" },
  { t: "active(0)", k: "leaf", v: "on", s: "on", c: "#e0a468", p: "up" },
  { t: "metal1(1)", k: "leaf", v: "on", s: "on", c: "#0a0a96", p: "down" },
  { t: "via1(1)", k: "leaf", v: "on", s: "on", c: "#c0141c", p: "dots" },
  { t: "metal2(2)", k: "leaf", v: "on", s: "on", c: "#b8141c", p: "up" },
  { t: "via2(2)", k: "leaf", v: "on", s: "on", c: "#14a81c", p: "dots" },
  { t: "metal3(3)", k: "leaf", v: "on", s: "on", c: "#18a02c", p: "downWide" },
  { t: "via3(3)", k: "leaf", v: "on", s: "on", c: "#d2c82c", p: "dots" },
  { t: "metal4(4)", k: "leaf", v: "on", s: "on", c: "#ccc420", p: "upWide" },
  { t: "via4(4)", k: "leaf", v: "on", s: "on", c: "#8c1420", p: "dots" },
  { t: "metal5(5)", k: "leaf", v: "on", s: "on", c: "#8c1420", p: "downWide" },
  { t: "via5(5)", k: "leaf", v: "on", s: "on", c: "#e0a030", p: "dots" },
  { t: "metal6(6)", k: "leaf", v: "on", s: "on", c: "#dca020", p: "upWide" },
  { t: "via6(6)", k: "leaf", v: "off", s: "off", c: "#9a14a8", p: "dots" },
];

function Swatch({ c, p }: { c: string; p: string }) {
  const step = p.includes("Wide") ? 16 : 7.5;
  const lines = Array.from({ length: 14 }, (_, i) => -33 + i * step).filter((o) => o < 34);
  return (
    <svg width="32" height="32" viewBox="0 0 32 32" fill="none" shapeRendering={p === "mesh" ? "crispEdges" : "auto"}>
      <rect x="1" y="1" width="30" height="30" fill="#fff" />
      {p === "mesh" &&
        Array.from({ length: 128 }, (_, i) => {
          const r = Math.floor(i / 8);
          return <rect key={i} x={(i % 8) * 4 + (r % 2) * 2} y={r * 2} width="2" height="2" fill={c} />;
        })}
      {p.startsWith("up") && lines.map((o) => <path key={o} d={`M${o} 32l32 -32`} stroke={c} strokeWidth="1.600" />)}
      {p.startsWith("down") && lines.map((o) => <path key={o} d={`M${o} 0l32 32`} stroke={c} strokeWidth="1.600" />)}
      {p === "dots" &&
        Array.from({ length: 30 }, (_, i) => {
          const r = Math.floor(i / 5);
          return <rect key={i} x={3 + (i % 5) * 6 + (r % 2) * 3} y={4 + r * 4.6} width="2" height="2" fill={c} />;
        })}
      <rect x="1" y="1" width="30" height="30" stroke={c} strokeWidth="2" />
    </svg>
  );
}

function Check({ m }: { m: Mark }) {
  if (!m) return <div className="h-6 w-6 shrink-0" />;
  return (
    <div
      className={`flex h-[23px] w-[24px] shrink-0 items-center justify-center rounded-sm border-b-2 ${
        m === "dim"
          ? "border-[#ccc] bg-[#f8f8f8]"
          : "border-[#555] bg-gradient-to-b from-[#f8f8f8] to-[#dedede] shadow-[inset_0_0_0_1px_#d8d8d8]"
      }`}
    >
      {m === "sq" && <i className="h-2 w-[10px] bg-[#c8141c]" />}
      {(m === "on" || m === "dim") && (
        <svg width="20" height="18" viewBox="0 0 20 18">
          <path d="M2 7L7 9.500L17 2L18.500 4L9.500 17L6.500 16.500Z" fill={m === "on" ? "#cc0c14" : "#98707c"} />
        </svg>
      )}
    </div>
  );
}

const Expander = ({ open }: { open?: boolean }) => (
  <div className="flex h-[18px] w-[18px] shrink-0 items-center justify-center border-2 border-[#3c3c3c] bg-white">
    <svg width="12" height="12" viewBox="0 0 12 12">
      <path d={open ? "M1 6H11" : "M1 6H11M6 1V11"} stroke="#000" strokeWidth="2" />
    </svg>
  </div>
);

const Dots = ({ className }: { className: string }) => <i className={`h-0 shrink-0 border-t-2 border-dotted border-[#777] ${className}`} />;

function TreeRow({ r }: { r: Row }) {
  const head = r.k === "group" || r.k === "open";
  return (
    <div className="flex h-[34px] shrink-0 items-center">
      <div className="flex h-full w-[268px] shrink-0 items-center overflow-hidden whitespace-nowrap text-[#1f1f1f]">
        {head && (
          <>
            <div className="flex h-full w-[18px] shrink-0 flex-col items-center ml-[12px]">
              <i className="w-0 flex-1 border-l-2 border-dotted border-[#777]" />
              <Expander open={r.k === "open"} />
              <i className="w-0 flex-1 border-l-2 border-dotted border-[#777]" />
            </div>
            <Dots className="w-[10px]" />
            <span className="ml-[4px] text-[23.600px] font-bold">{r.t}</span>
          </>
        )}
        {r.k === "sub" && (
          <>
            <div className="ml-[20px] h-full w-[2px] border-l-2 border-dotted border-[#777]" />
            <div className="ml-[30px]" />
            <Expander />
            <Dots className="w-[10px]" />
            <span className="ml-[8px]">{r.t}</span>
          </>
        )}
        {r.k === "leaf" && (
          <>
            <div className="ml-[20px] h-full w-[2px] border-l-2 border-dotted border-[#777]" />
            <div className="ml-[38px] h-full w-[2px] border-l-2 border-dotted border-[#777]" />
            <Dots className="w-[16px]" />
            <i className="ml-[8px] h-[20px] w-[20px] shrink-0 rounded-full border-2 border-[#dcdcdc]" />
            <span className="ml-[2px]">{r.t}</span>
          </>
        )}
      </div>
      <div className="flex w-[33px] shrink-0 items-center">{r.c && <Swatch c={r.c} p={r.p!} />}</div>
      <div className="flex gap-2">
        <Check m={r.v} />
        <Check m={r.s} />
      </div>
    </div>
  );
}

const HeadButton = ({ children }: Kids) => (
  <div className="flex h-[34px] w-[34px] items-center justify-center rounded-full border border-[#999] bg-gradient-to-b from-white to-[#cfcfcf] text-[23px] text-[#222]">
    {children}
  </div>
);

function RightPanel() {
  return (
    <div className="flex w-[411px] shrink-0 flex-col bg-[#f0f0f0] text-[23.500px] text-[#1c1c1c]">
      <div className="ml-[2px] flex h-[43px] w-[153px] shrink-0 items-center justify-center rounded-full border border-b-2 border-[#b5b5b5] border-b-[#777] bg-gradient-to-b from-[#fbfbfb] to-[#c6c6c6] pb-px pr-[2px]">
        All Colors
      </div>
      <div className="mt-[3px] flex h-[1041px] w-[405px] shrink-0 border-l-8 border-t-[6px] border-[#2a2a2a] bg-white">
        <div className="flex w-[364px] flex-col overflow-hidden">
          <div className="flex h-[38px] shrink-0 items-center justify-end gap-[2px] bg-gradient-to-b from-[#cdcdcd] to-[#a0a0a0] pr-[1px]">
            <HeadButton>V</HeadButton>
            <HeadButton>S</HeadButton>
          </div>
          {rows.map((r) => (
            <TreeRow key={r.t} r={r} />
          ))}
        </div>
        <div className="flex w-[32px] flex-col bg-[#939393]">
          <div className="flex h-[32px] items-center justify-center border-b-2 border-[#555] bg-gradient-to-b from-[#f0f0f0] to-[#cacaca]">
            <svg width="20" height="15" viewBox="0 0 20 15">
              <path d="M10 1L19 14H1Z" fill="#fff" stroke="#a8a8a8" />
            </svg>
          </div>
          <div className="mt-[223px] flex h-[541px] flex-col items-center justify-center gap-[4px] rounded-full border border-[#888] bg-[#bababa]">
            {[0, 1, 2, 3].map((i) => (
              <i key={i} className="h-px w-3 bg-[#666]" />
            ))}
          </div>
          <div className="mt-auto flex h-[32px] items-center justify-center border-b-2 border-[#555] bg-gradient-to-b from-[#f0f0f0] to-[#cacaca]">
            <svg width="20" height="15" viewBox="0 0 20 15">
              <path d="M10 14L19 1H1Z" fill="#fff" stroke="#a8a8a8" />
            </svg>
          </div>
        </div>
      </div>
      <div className="flex flex-1 items-center pt-1">
        <span className="ml-[6px] w-[79px]">Detail</span>
        <div className="mt-1 flex w-[224px] flex-col pl-[7px]">
          <div className="flex h-[30px] items-center">
            <div className="flex h-[28px] w-[20px] items-center justify-center rounded border border-b-2 border-[#999] border-b-[#666] bg-gradient-to-b from-white to-[#ccc]">
              <i className="h-[12px] w-[4px] bg-[#b40c14]" />
            </div>
            <i className="h-[2px] w-[195px] bg-[#ababab]" />
          </div>
          <div className="ml-[58px] mt-[1px] flex h-[9px] gap-[46px]">
            <i className="w-[2px] bg-[#aaa]" />
            <i className="w-[2px] bg-[#aaa]" />
            <i className="w-[2px] bg-[#aaa]" />
          </div>
        </div>
        <span className="ml-[15px]">Speed</span>
      </div>
    </div>
  );
}

/* ---------- canvas ---------- */

function Note({ lines, className }: { lines: string[]; className: string }) {
  return (
    <div
      className={`absolute whitespace-nowrap text-center font-['Liberation_Sans'] text-[36px] leading-[54px] tracking-[0.2px] text-[#ff2b1f] ${className}`}
    >
      {lines.map((l) => (
        <div key={l} className="text-[45px]">
          {l}
        </div>
      ))}
    </div>
  );
}

function Canvas() {
  return (
    <div className="relative flex w-[1410px] shrink-0 bg-black">
      <Die />
      <div className="relative flex w-[50px] shrink-0 justify-center">
        <div className="flex h-[50px] w-[44px] items-start justify-center bg-[#ececec] pt-1">
          <div className="h-[37px] w-[37px] border-2 border-[#6a7699] bg-[linear-gradient(155deg,#d9546c_5%,#f0a04c_32%,#f5d442_52%,#3bb54a_66%,#2f8f9c_85%,#4a63c0)]" />
        </div>
      </div>
      <DensityPanel />
      <div className="relative ml-auto grid h-[50px] w-[46px] grid-cols-2 place-items-center bg-[#f3f3f3] p-[5px]">
        <i className="h-3 w-3 bg-[#c4525c]" />
        <i className="h-3 w-3 bg-[#35a33c]" />
        <i className="h-3 w-3 bg-[#e2a03c]" />
        <i className="h-3 w-3 bg-[#5870b8]" />
      </div>
    </div>
  );
}

function StatusBar() {
  return (
    <div className="flex h-[43px] shrink-0 items-end overflow-hidden bg-[#f4f4f4] text-[23.900px] text-[#333]">
      <div className="flex h-[40px] w-[48px] items-center justify-center border-r-4 border-t-2 border-[#333] bg-white pl-[7px] pt-[6px] text-[23px] font-bold text-black">
        Q
      </div>
      <div className="ml-[8px] flex h-[40px] w-[48px] items-center border-l-2 border-r-4 border-t-2 border-[#333] bg-white">
        <svg width="42" height="38" viewBox="0 0 42 38" fill="none">
          <rect x="9" y="6" width="8" height="7" stroke="#dc6c64" strokeWidth="3" />
          <rect x="8" y="17" width="11" height="8" fill="#6f7fc0" />
          <rect x="9" y="29" width="8" height="8" stroke="#e8a45c" strokeWidth="3" />
          <circle cx="31" cy="22" r="10.500" fill="#ccd2e4" stroke="#555f7c" strokeWidth="2.500" />
          <path d="M31 14V23H36" stroke="#222" strokeWidth="2" />
          <path d="M29 34H42L36 39Z" fill="#111" />
        </svg>
      </div>
      <div className="ml-[8px] flex h-[40px] flex-1 items-center border-l-2 border-t-2 border-[#444] bg-white pl-[10px] pt-[12px]">
        <span className="whitespace-nowrap">Click to select single object. Shift+Click to de/select multiple objects.</span>
        <div className="ml-auto mr-[17px] flex gap-[8px] whitespace-nowrap text-[23.500px] font-bold text-[#5a5a5a]">
          <span>-5.43250, 45.49950</span>
          <span className="text-[#6c84d6]">Sel: 0</span>
          <span className="text-[#3cb4ae]">Routed</span>
        </div>
      </div>
      <div className="h-[40px] w-[9px] border-l-2 border-[#444] bg-white" />
    </div>
  );
}

export default function App() {
  return (
    <div className="relative flex h-[1458px] w-[1920px] flex-col overflow-hidden bg-[#f0f0f0] font-['Open_Sans',sans-serif]">
      <MenuBar />
      <div className="h-[8px] shrink-0 bg-[#c80000]" />
      <Tabs />
      <Toolbars />
      <div className="flex h-[1173px] shrink-0">
        <SideBar />
        <Canvas />
        <div className="w-[12px] shrink-0 bg-[#cdcdcd]" />
        <RightPanel />
        <div className="flex-1 border-l-2 border-white bg-[#1a1a1a]" />
      </div>
      <StatusBar />

      {/* tutorial callouts */}
      <Note lines={["Then click these", "small corner boxes", 'and click "Apply"']} className="left-[457px] top-[339px] w-[400px]" />
      <Note lines={["First choose an", "overlay by checking", "the box here"]} className="left-[907px] top-[311px] w-[420px]" />
      <div className="absolute left-[1504px] top-[531px] z-20 h-[247px] w-[385px] border-[10px] border-[#ff2b1f]" />
      <svg width="1920" height="700" viewBox="0 0 1920 700" className="absolute left-0 top-0 z-20" fill="#ff2b1f">
        <path d="M142 294L195 283L192 300L457 373L454 384L189 312L182 330Z" />
        <path d="M1284 449L1468 559L1479 543L1507 588L1454 584L1462 570L1279 458Z" />
      </svg>
    </div>
  );
}
